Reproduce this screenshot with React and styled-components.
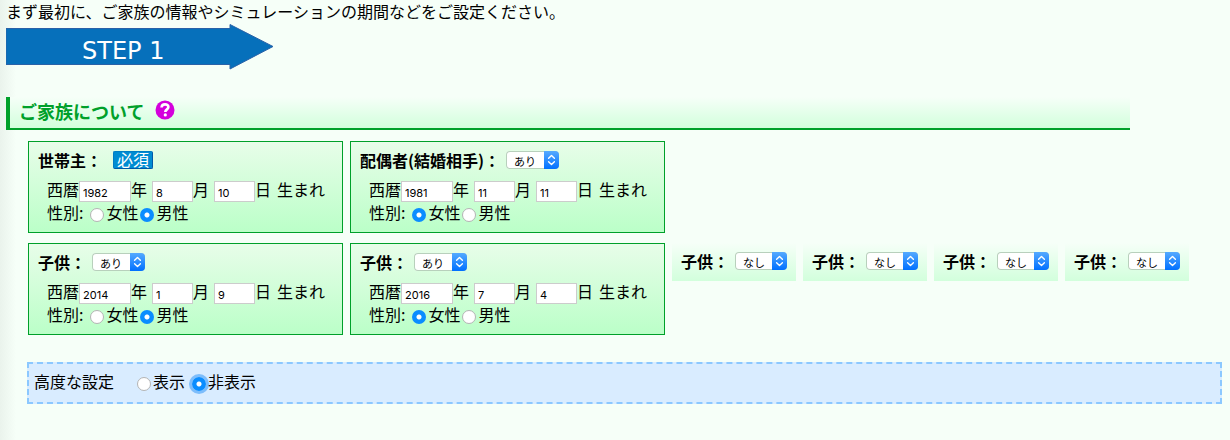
import React, { useState } from "react";

import styled, { createGlobalStyle, css } from 'styled-components'

const GlobalStyle = createGlobalStyle`
  body {
    margin: 0;
    min-height: 100vh;
    color: #000;
    background:
      linear-gradient(to right, #eaf3ec, rgba(246, 255, 248, 0) 16px),
      #f6fff8;
    font-family: "Noto Sans CJK JP", sans-serif;
    font-size: 16px;
    line-height: 24px;
  }
`;

const Page = styled.main`
  padding: 0 8px 0 6px;
`;

const Intro = styled.p`
  margin: 0;
  padding-bottom: 2px;
  line-height: 22px;
`;

const StepArrow = styled.svg`
  display: block;
  width: 268px;
  height: 46px;
`;

const Heading = styled.h2`
  display: flex;
  align-items: center;
  gap: 11px;
  height: 31px;
  margin: 27px 92px 0 0;
  padding-left: 9px;
  border-left: 4px solid #00a02a;
  border-bottom: 2px solid #00a02a;
  background: linear-gradient(#f6fff8, #d2ffdc);
  color: #00a02a;
  font-size: 18px;
  line-height: 27px;

  span {
    padding-bottom: 2px;
  }
`;

const HelpButton = styled.button`
  display: block;
  width: 20px;
  height: 20px;
  margin-bottom: 5px;
  padding: 0;
  border: 0;
  background: none;
  cursor: pointer;

  svg {
    display: block;
  }
`;

const Family = styled.div`
  display: flex;
  flex-direction: column;
  gap: 10px;
  margin: 11px 0 0 22px;
`;

const FamilyRow = styled.div`
  display: flex;
  flex-wrap: wrap;
  align-items: flex-start;
  gap: 7px;
`;

const Card = styled.section`
  box-sizing: border-box;
  padding: 6px 9px;
  white-space: nowrap;
  ${({ $open }) => $open ? css`
    width: 315px;
    border: 1px solid #00a02a;
    background: linear-gradient(#e8fde9, #bbffc8);
  ` : css`
    width: 124px;
    padding-bottom: 8px;
    background: linear-gradient(#f6fff8, #d2ffdc);
  `}
`;

const CardTitle = styled.div`
  display: flex;
  align-items: center;
  gap: 6px;
  font-weight: bold;
`;

const Required = styled.span`
  margin-left: 5px;
  padding: 0 3px 2px;
  border: 1px solid #007cc4;
  border-right-color: #0058a8;
  border-bottom-color: #0058a8;
  border-radius: 2px;
  background: #008cd2;
  color: #fff;
  font-weight: normal;
  line-height: 14px;
`;

const SelectWrap = styled.span`
  display: flex;
  box-sizing: border-box;
  width: 53px;
  height: 18px;
  border-radius: 4px;
  overflow: hidden;
  background: #fff;
  box-shadow: inset 0 0 0 1px #b8d0bc;

  select {
    flex: 1;
    min-width: 0;
    padding: 3px 0 0 8px;
    border: 0;
    appearance: none;
    background: none;
    color: #000;
    font: 11px/15px "Noto Sans CJK JP", sans-serif;
  }

  svg {
    flex: none;
    background: linear-gradient(#55aaff, #0070ff);
  }
`;

const Birth = styled.div`
  display: flex;
  align-items: flex-start;
  height: 21px;
  margin: 9px 0 0 9px;
  line-height: 16px;
`;

const DateInput = styled.input`
  box-sizing: border-box;
  width: ${({ $year }) => $year ? '52px' : '41px'};
  height: 21px;
  margin: 0 0 0 ${({ $year }) => $year ? '0' : '5px'};
  padding: 2px 3px 0;
  border: 1px solid #ccc;
  background: #fff;
  color: #000;
  font: 11px Inter, sans-serif;
`;

const Born = styled.span`
  margin-left: 6px;
`;

const Gender = styled.div`
  display: flex;
  height: 24px;
  margin-left: 9px;
  line-height: 20px;
`;

const GenderLabel = styled.span`
  margin-right: 7px;
`;

const RadioLabel = styled.label`
  display: flex;
  align-items: flex-start;
  margin-right: 2px;
`;

const Radio = styled.input.attrs({ type: 'radio' })`
  appearance: none;
  flex: none;
  box-sizing: border-box;
  width: 14px;
  height: 14px;
  margin: 6px 2px 0 0;
  border: 1px solid #b4b4b4;
  border-radius: 50%;
  background: #fff;

  &:checked {
    border: 0;
    background: radial-gradient(circle, #fff 2px, #0a8dff 3px);
    ${({ $ring }) => $ring && css`box-shadow: 0 0 0 3px #7dbdfb;`}
  }
`;

const Advanced = styled.div`
  display: flex;
  align-items: flex-start;
  margin: 27px 0 0 21px;
  padding: 7px 5px 11px;
  border: 2px dashed #8cc8ff;
  background: #d9ecff;
  line-height: 20px;
`;

const AdvancedLabel = styled.span`
  margin-right: 23px;
`;

const AdvancedOption = styled(RadioLabel)`
  margin-right: 7px;
`;

const Toggle = ({ label, value }) => (
  <SelectWrap>
    <select aria-label={label} defaultValue={value}>
      <option>あり</option>
      <option>なし</option>
    </select>
    <svg width="15" height="18" viewBox="0 0 15 18" fill="none" stroke="#fff" strokeWidth="1.4" strokeLinecap="round" strokeLinejoin="round">
      <path d="M4.6 7.3 7.5 4.6l2.9 2.7M4.6 10.7l2.9 2.7 2.9-2.7" />
    </svg>
  </SelectWrap>
)

const Person = ({ id, title, required, status, birth, gender }) => {
  const [sex, setSex] = useState(gender)

  return (
    <Card $open={!!birth}>
      <CardTitle>
        <span>{title}</span>
        {required && <Required>必須</Required>}
        {status && <Toggle label={title} value={status} />}
      </CardTitle>
      {birth && (
        <>
          <Birth>
            <label htmlFor={id + '-year'}>西暦</label>
            <DateInput $year id={id + '-year'} defaultValue={birth[0]} />
            <label htmlFor={id + '-year'}>年</label>
            <DateInput id={id + '-month'} defaultValue={birth[1]} />
            <label htmlFor={id + '-month'}>月</label>
            <DateInput id={id + '-day'} defaultValue={birth[2]} />
            <label htmlFor={id + '-day'}>日</label>
            <Born>生まれ</Born>
          </Birth>
          <Gender>
            <GenderLabel>性別:</GenderLabel>
            {['女性', '男性'].map((g) => (
              <RadioLabel key={g}>
                <Radio name={id + '-sex'} checked={sex === g} onChange={() => setSex(g)} />
                {g}
              </RadioLabel>
            ))}
          </Gender>
        </>
      )}
    </Card>
  )
}

export default function App() {
  const [advanced, setAdvanced] = useState('非表示')

  return (
    <Page>
      <GlobalStyle />
      <Intro>まず最初に、ご家族の情報やシミュレーションの期間などをご設定ください。</Intro>
      <StepArrow viewBox="0 0 268 46" role="img" aria-label="STEP 1">
        <path d="M0 4.500H224V0.500L267 22.500L224 45V40.500H0Z" fill="#0670bb" stroke="#2a62a8" strokeWidth="1" />
        <text x="76" y="35" fill="#fff" fontFamily="DejaVu Sans, sans-serif" fontSize="24">STEP 1</text>
      </StepArrow>

      <Heading>
        <span>ご家族について</span>
        <HelpButton type="button" aria-label="ヘルプ">
          <svg width="20" height="20" viewBox="0 0 20 20">
            <circle cx="10" cy="10" r="9.500" fill="#d400dc" />
            <path d="M6.500 7.500C6.700 5.200 8.200 4.400 10 4.400c2 0 3.400 1 3.400 2.700 0 2.200-3.100 2.400-3.100 4.900" fill="none" stroke="#fff" strokeWidth="2.600" />
            <circle cx="10.300" cy="14.900" r="1.600" fill="#fff" />
          </svg>
        </HelpButton>
      </Heading>

      <Family>
        <FamilyRow>
          <Person id="head" title="世帯主：" required birth={['1982', '8', '10']} gender="男性" />
          <Person id="spouse" title="配偶者(結婚相手)：" status="あり" birth={['1981', '11', '11']} gender="女性" />
        </FamilyRow>
        <FamilyRow>
          <Person id="child1" title="子供：" status="あり" birth={['2014', '1', '9']} gender="男性" />
          <Person id="child2" title="子供：" status="あり" birth={['2016', '7', '4']} gender="女性" />
          <Person id="child3" title="子供：" status="なし" />
          <Person id="child4" title="子供：" status="なし" />
          <Person id="child5" title="子供：" status="なし" />
          <Person id="child6" title="子供：" status="なし" />
        </FamilyRow>
      </Family>

      <Advanced>
        <AdvancedLabel>高度な設定</AdvancedLabel>
        {['表示', '非表示'].map((v) => (
          <AdvancedOption key={v}>
            <Radio $ring name="advanced" checked={advanced === v} onChange={() => setAdvanced(v)} />
            {v}
          </AdvancedOption>
        ))}
      </Advanced>
    </Page>
  )
}
